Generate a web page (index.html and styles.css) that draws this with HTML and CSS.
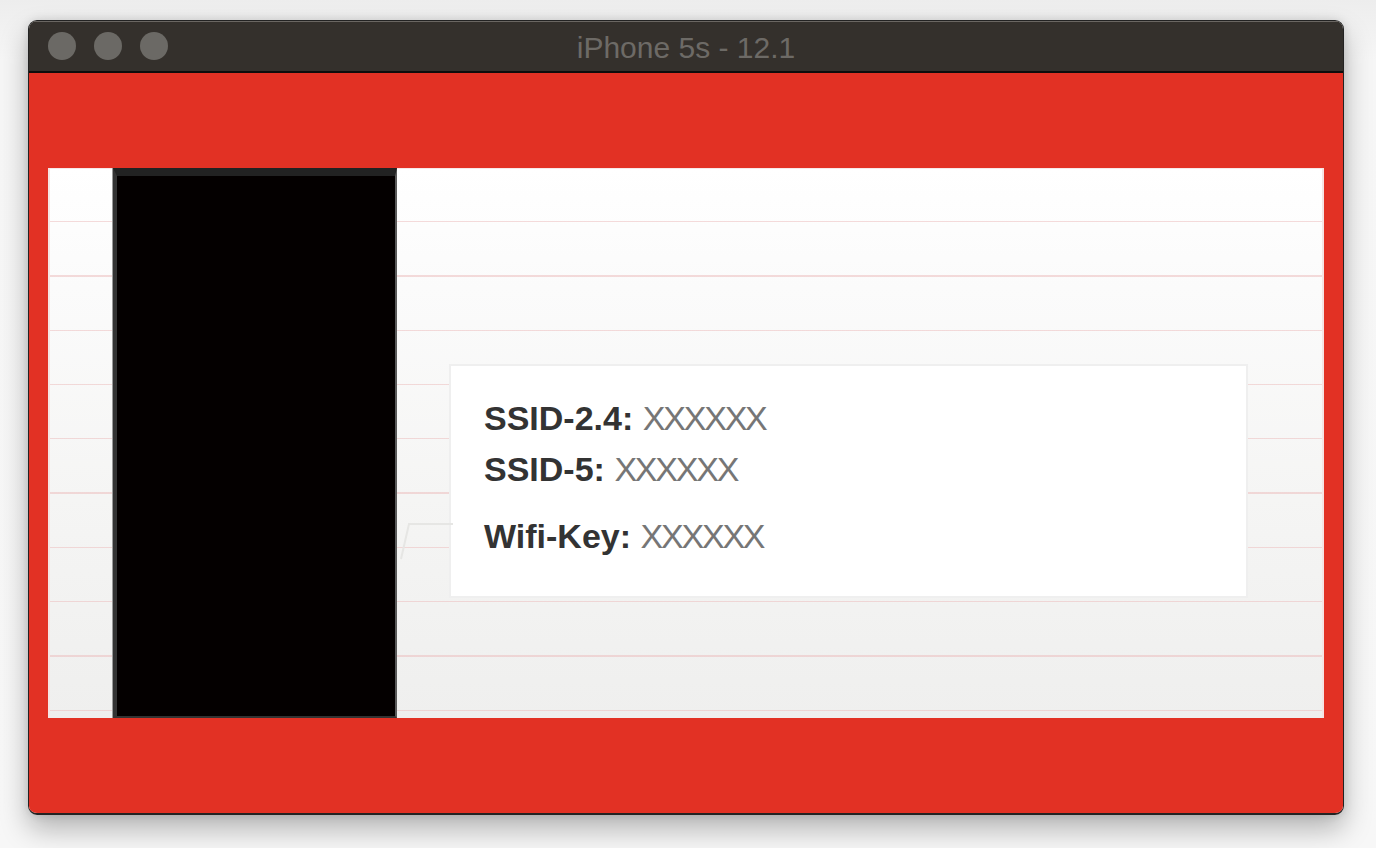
FILE: index.html
```html
<!DOCTYPE html>
<html lang="en">
<head>
<meta charset="utf-8">
<title>iPhone 5s - 12.1</title>
<link rel="stylesheet" href="styles.css">
</head>
<body>
  <div class="window">
    <div class="titlebar">
      <div class="lights">
        <span class="light"></span>
        <span class="light"></span>
        <span class="light"></span>
      </div>
      <div class="title">iPhone 5s - 12.1</div>
    </div>
    <div class="screen">
      <div class="panel">
        <div class="blackbox"></div>
        <div class="card">
          <div class="line"><b>SSID-2.4:</b> <span class="val">XXXXXX</span></div>
          <div class="line"><b>SSID-5:</b> <span class="val">XXXXXX</span></div>
          <div class="line key"><b>Wifi-Key:</b> <span class="val">XXXXXX</span></div>
        </div>
        <svg class="tab" width="56" height="44" viewBox="0 0 56 44">
          <path d="M4 40 L12 5 L56 5" fill="none" stroke="#e6e6e4" stroke-width="2"/>
        </svg>
      </div>
    </div>
  </div>
</body>
</html>
```

FILE: styles.css
```css
* { box-sizing: border-box; }
html, body { margin: 0; padding: 0; }
body {
  width: 1376px;
  height: 848px;
  overflow: hidden;
  background: linear-gradient(to bottom, #ededed 0, #f6f6f6 60px, #f7f7f7 100%);
  padding: 20px 0 0 28px;
  font-family: "Liberation Sans", Arial, Helvetica, sans-serif;
}
.window {
  width: 1316px;
  border: 1px solid #232323;
  border-bottom-width: 2px;
  border-radius: 9px;
  overflow: hidden;
  box-shadow: 0 14px 28px rgba(0,0,0,0.28), 0 0 10px rgba(0,0,0,0.12);
}
.titlebar {
  height: 52px;
  background: #34302c;
  box-shadow: inset 0 1px 0 #6a6662;
  border-bottom: 2px solid #0e0d0c;
  display: flex;
  align-items: center;
  position: relative;
  padding-left: 19px;
}
.lights { display: flex; gap: 18px; margin-top: -1px; }
.light {
  width: 28px;
  height: 28px;
  border-radius: 50%;
  background: #6b6965;
}
.title {
  position: absolute;
  left: 0;
  right: 0;
  top: 10px;
  text-align: center;
  color: #6d6a66;
  font-size: 30px;
  line-height: 34px;
}
.screen {
  background: #e23124;
  padding: 95px 19px 95px 19px;
}
.panel {
  position: relative;
  height: 550px;
  display: flex;
  align-items: flex-start;
  padding-left: 65px;
  background:
    repeating-linear-gradient(to bottom, rgba(0,0,0,0) 0, rgba(0,0,0,0) 53px, rgba(236,190,190,0.55) 53px, rgba(236,190,190,0.55) 54.3px),
    linear-gradient(to bottom, #ffffff 0, #fbfbfb 120px, #f5f5f4 330px, #efefee 550px);
  box-shadow: inset 2px 0 0 #f6e4e4, inset -2px 0 0 #f6e4e4, inset 0 1px 0 #f8e8e8;
}
.blackbox {
  width: 284px;
  height: 550px;
  flex: none;
  background: #040000;
  border-top: 8px solid #222;
  border-left: 4px solid #333;
  border-right: 2px solid #5a5a5a;
  border-bottom: 2px solid #333;
  box-shadow: -1px 0 0 #9a9a9a;
}
.card {
  margin-left: 52px;
  margin-top: 196px;
  width: 799px;
  height: 234px;
  flex: none;
  background: #fff;
  border: 2px solid #efefef;
  padding: 27px 0 0 33px;
}
.line {
  font-size: 34px;
  line-height: 51px;
  color: #666;
  white-space: nowrap;
}
.line b {
  color: #333;
  font-weight: 700;
  letter-spacing: 0;
}
.val {
  color: #767676;
  letter-spacing: -2.2px;
}
.key { margin-top: 16px; }
.tab {
  position: absolute;
  left: 349px;
  top: 351px;
}
```
